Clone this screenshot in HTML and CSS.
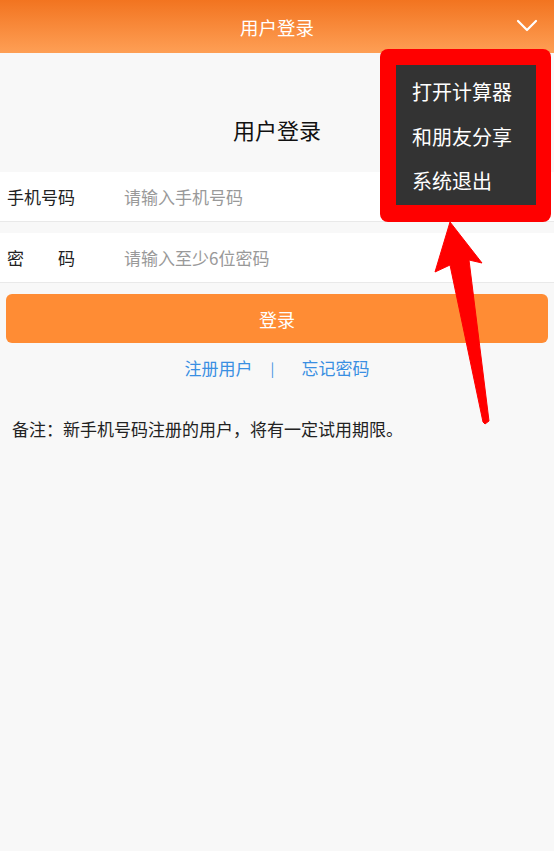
FILE: index.html
```html
<!DOCTYPE html>
<html>
<head>
    <title>用户登录</title>
    <link rel="stylesheet" href="styles.css">
</head>
<body>
    <div class="header">
        <span class="header-title">用户登录</span>
        <svg class="header-toggle" width="22" height="14" viewBox="0 0 22 14">
            <polyline points="2,2 11,11 20,2" fill="none" stroke="#ffffff" stroke-width="2.2" stroke-linecap="round" stroke-linejoin="round"/>
        </svg>
    </div>

    <div class="page">
        <h1 class="page-title">用户登录</h1>

        <div class="field">
            <label class="field-label">手机号码</label>
            <input class="field-input" type="text" placeholder="请输入手机号码">
        </div>
        <div class="field">
            <label class="field-label spaced"><span>密</span><span>码</span></label>
            <input class="field-input" type="password" placeholder="请输入至少6位密码">
        </div>

        <button class="login-btn">登录</button>

        <div class="links">
            <a href="#">注册用户</a>
            <span class="sep">|</span>
            <a href="#">忘记密码</a>
        </div>

        <p class="note">备注：新手机号码注册的用户，将有一定试用期限。</p>
    </div>

    <div class="menu-highlight">
        <ul class="menu">
            <li>打开计算器</li>
            <li>和朋友分享</li>
            <li>系统退出</li>
        </ul>
    </div>

    <svg class="pointer" width="554" height="851" viewBox="0 0 554 851">
        <polygon points="450,222 482,263 469,260 489,421 485,424 483,422 450,265 435,272" fill="#ff0000" stroke="#ff0000" stroke-width="1" stroke-linejoin="round"/>
    </svg>
</body>
</html>
```

FILE: styles.css
```css
body {
    margin: 0;
    background-color: #f8f8f8;
    font-family: 'Noto Sans CJK SC', 'Noto Sans', sans-serif;
    color: #222;
    min-height: 851px;
    position: relative;
}
.header {
    height: 53px;
    background: linear-gradient(to bottom, #f27420, #fe9f55);
    display: flex;
    align-items: center;
    justify-content: center;
    position: relative;
}
.header-title {
    color: #ffffff;
    font-size: 18.5px;
}
.header-toggle {
    position: absolute;
    right: 16px;
    top: 19px;
}
.page-title {
    font-size: 22px;
    font-weight: normal;
    text-align: center;
    margin: 0;
    padding: 61px 0 0;
    height: 58px;
    line-height: 30px;
    color: #111;
}
.field {
    display: flex;
    align-items: center;
    height: 49px;
    background-color: #ffffff;
    border-bottom: 1px solid #e9e9e9;
    margin-bottom: 11px;
    padding-left: 7px;
}
.field-label {
    width: 117px;
    font-size: 17px;
    color: #222;
}
.field-label.spaced {
    display: flex;
    gap: 34px;
}
.field-input {
    border: none;
    outline: none;
    background: transparent;
    font-family: inherit;
    font-size: 17px;
    flex: 1;
    padding: 0;
    color: #333;
}
.field-input::placeholder {
    color: #999;
}
.login-btn {
    display: block;
    width: 542px;
    height: 49px;
    margin: 1px 0 0 6px;
    background-color: #ff8c34;
    border: none;
    border-radius: 6px;
    color: #ffffff;
    font-family: inherit;
    font-size: 18px;
}
.links {
    display: flex;
    justify-content: center;
    align-items: center;
    margin-top: 11px;
    height: 27px;
    font-size: 17px;
}
.links a {
    color: #3a8fe2;
    text-decoration: none;
}
.sep {
    color: #3a8fe2;
    font-size: 14px;
    margin: 0 27px 0 18px;
}
.note {
    margin: 35px 0 0 12px;
    font-size: 17px;
    color: #222;
}
.menu-highlight {
    position: absolute;
    left: 380px;
    top: 49px;
    width: 140px;
    height: 141px;
    padding: 16px 15px 16px 16px;
    background-color: #ff0000;
    border-radius: 8px;
}
.menu {
    list-style: none;
    margin: 0;
    padding: 12px 0 0 16px;
    height: 128px;
    background-color: #333333;
}
.menu li {
    color: #ffffff;
    font-size: 20px;
    height: 44.5px;
    line-height: 30px;
}
.pointer {
    position: absolute;
    left: 0;
    top: 0;
    pointer-events: none;
}
```
